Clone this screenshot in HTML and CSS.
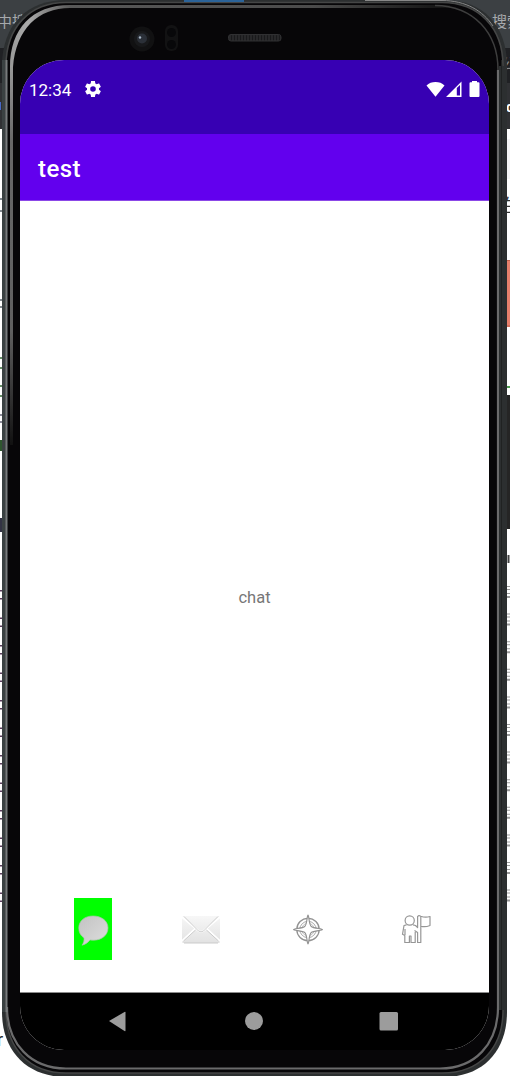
FILE: index.html
```html
<!DOCTYPE html>
<html lang="en">
<head>
<meta charset="utf-8">
<title>test</title>
<link rel="stylesheet" href="styles.css">
</head>
<body>
<div class="desktop">
  <svg class="backdrop" viewBox="0 0 510 1076" aria-hidden="true">
    <rect width="510" height="48" fill="#3c4043"/>
    <rect y="48" width="510" height="35" fill="#202124"/>
    <rect y="83" width="510" height="46" fill="#303134"/>
    <rect x="506" y="139" width="4" height="40" fill="#f4f4f6"/>
    <path d="M0 102v8" stroke="#4668c8" stroke-width="2"/>
    <rect x="506" y="260" width="4" height="67" fill="#e8806c"/>
    <path d="M506 260.5h4M506 326h4" stroke="#c2604b"/>
    <path d="M506 387h4" stroke="#4f9c50" stroke-width="2"/>
    <rect x="506" y="395" width="4" height="134" fill="#252525"/>
    <path d="M0 199h2M0 211h2M0 300h2M0 307h2" stroke="#59636b" stroke-width="1.5"/>
    <path d="M0 358h2M0 368h2M0 386h2M0 396h2" stroke="#356b35" stroke-width="1.5"/>
    <path d="M0 415h2M0 422h2" stroke="#667" stroke-width="1.5"/>
    <rect y="440" width="2" height="11" fill="#2e562e"/>
    <rect y="518" width="2" height="14" fill="#334"/>
    <path d="M1 590V905" stroke="#5a3d5c" stroke-width="2" stroke-dasharray="1.5 6.5 1.5 18"/>
    <path d="M508.500 555v8" stroke="#444" stroke-width="2"/>
    <path d="M508.500 586V905" stroke="#9a9a9a" stroke-width="3" stroke-dasharray="1 2 1 3 1 2 2 15.600"/>
  </svg>
  <span class="peek peek-left">中搜</span>
  <span class="peek peek-right">搜索</span>
  <span class="peek peek-tool">公</span>
  <span class="peek peek-copy">c</span>
  <span class="peek peek-text">生</span>
  <span class="peek peek-foot">r</span>

  <svg class="shell" viewBox="0 0 510 1076" aria-hidden="true">
    <defs>
      <linearGradient id="leftRim" x1="0" y1="0" x2="0" y2="1">
        <stop offset="0" stop-color="#999"/><stop offset=".2" stop-color="#686868"/>
        <stop offset=".7" stop-color="#606060"/><stop offset="1" stop-color="#111"/>
      </linearGradient>
      <linearGradient id="corner" x1="0" y1="0" x2="1" y2="0">
        <stop offset="0" stop-color="#999"/><stop offset=".3" stop-color="#aaa"/><stop offset="1" stop-color="#595959"/>
      </linearGradient>
      <linearGradient id="topRim" gradientUnits="userSpaceOnUse" x1="60" y1="0" x2="450" y2="0">
        <stop offset="0" stop-color="#595959"/><stop offset=".65" stop-color="#4b4b4b"/><stop offset="1" stop-color="#111"/>
      </linearGradient>
    </defs>
    <path d="M2 66C2 25 27 0 66 0H444C483 0 507 25 507 66V1012C507 1051 483 1077 444 1077H66C27 1077 2 1051 2 1012Z" fill="#2c2f30"/>
    <path d="M6 66C6 27 30 2.500 66 2.500H442C478 2.500 503 27 503 66V1010C503 1048 480 1073 442 1073H66C29 1073 6 1048 6 1010Z" fill="#070608" stroke="#454646" stroke-width="1.500"/>
    <path d="M498 70V1007C498 1044 475 1068.500 440 1068.500H66C31 1068.500 7 1044 7 1007" fill="none" stroke="#6b6b6c" stroke-width="2.200"/>
    <path d="M503 66V1010" stroke="#2c2f30" stroke-width="8"/>
    <path d="M501.500 60V1010" stroke="#202222"/>
    <path d="M3.500 60V1012" stroke="#3a4142" stroke-width="3"/>
    <path d="M6.500 60V1012" stroke="#777b7c" stroke-width="2"/>
    <path d="M10 66V445H13V66Z" fill="url(#leftRim)"/>
    <path d="M10 67C10 29 32 5 70 5V8C38 8 16 29 13 67Z" fill="url(#corner)"/>
    <rect x="70" y="5" width="380" height="3" fill="url(#topRim)"/>
    <path d="M435 5.500C474 6 498 33 498 70" fill="none" stroke="#3e3e3e" stroke-width="1.500"/>
    <path d="M365 .5H442C466 .5 483 11 493 26" fill="none" stroke="#888"/>
    <rect x="184" width="60" height="2" fill="#2b6399"/>
    <circle cx="142" cy="39" r="12.500" fill="#111112"/>
    <circle cx="142" cy="39" r="8" fill="#18191b"/>
    <circle cx="142" cy="38.500" r="5" fill="#2b3038"/>
    <circle cx="140" cy="37.500" r="1.200" fill="#a7b7c6"/>
    <rect x="165" y="25" width="13" height="26" rx="6" fill="#121213"/>
    <circle cx="171.500" cy="32.500" r="4.500" fill="#08080a"/>
    <circle cx="171.500" cy="44.500" r="4.500" fill="#08080a"/>
    <rect x="228.500" y="34.500" width="52.500" height="6.500" rx="2.500" fill="#28282a" stroke="#303032"/>
    <path d="M231 37.800H280" stroke="#19191b" stroke-width="5" stroke-dasharray="1 2"/>
  </svg>

  <main class="screen">
    <header class="status">
      <span class="clock">12:34</span>
      <svg class="gear" viewBox="2 2 20 20"><path fill="#fff" d="M19.430 12.980c.04-.32.070-.64.070-.98s-.030-.66-.070-.98l2.110-1.650c.19-.15.240-.42.120-.64l-2-3.460c-.12-.22-.39-.3-.61-.22l-2.490 1c-.52-.4-1.080-.73-1.690-.98l-.38-2.650C14.460 2.180 14.250 2 14 2h-4c-.25 0-.46.180-.49.420l-.38 2.650c-.61.250-1.170.59-1.690.98l-2.490-1c-.23-.09-.49 0-.61.220l-2 3.460c-.13.220-.07.490.12.640l2.110 1.650c-.04.320-.07.650-.07.980s.030.660.070.980l-2.110 1.650c-.19.150-.24.420-.12.640l2 3.460c.12.220.39.300.61.220l2.490-1c.52.400 1.080.730 1.690.980l.38 2.650c.03.240.24.420.49.420h4c.25 0 .46-.18.490-.42l.38-2.650c.61-.25 1.170-.59 1.690-.98l2.490 1c.23.090.49 0 .61-.22l2-3.460c.12-.22.070-.49-.12-.64zM12 15.500a3.500 3.500 0 1 1 0-7 3.500 3.500 0 0 1 0 7z"/></svg>
      <svg class="signals" viewBox="0 0 54 17">
        <path fill="#fff" d="M.5 4.500C5-.1 14-.1 18.500 4.500L9.500 15.800Z"/>
        <path fill="#fff" fill-rule="evenodd" d="M20 16 35.500.5V16ZM30.800 7V14.500H34V3.900Z"/>
        <path fill="#fff" d="M43.500 2.200a1 1 0 0 1 1-1H46V0h5v1.200h1.500a1 1 0 0 1 1 1V15a1 1 0 0 1-1 1h-8a1 1 0 0 1-1-1Z"/>
      </svg>
    </header>
    <div class="appbar"><h1>test</h1></div>
    <section class="content">chat</section>
    <nav class="tabs">
      <a class="tab active">
        <svg width="38" height="62" viewBox="0 0 38 62"><defs><linearGradient id="bubble" x1="0" y1="0" x2="1" y2="1"><stop stop-color="#c2c2c2"/><stop offset="1" stop-color="#dedede"/></linearGradient></defs><path d="M19 18C10.500 18 4.800 23 4.800 30c0 4.400 1.800 7.700 5.200 10 .3 2.500-.4 5-2 7.200 3.600-1 6.200-2.900 8-5.300 10 1.600 18-3.800 18-12 0-7-6.500-11.900-15-11.900Z" fill="url(#bubble)" stroke="#a7c5a7" stroke-width=".7"/></svg>
      </a>
      <a class="tab">
        <svg width="40" height="62" viewBox="0 0 40 62"><defs><linearGradient id="mail" x1="0" y1="0" x2="0" y2="1"><stop stop-color="#f7f7f7"/><stop offset="1" stop-color="#e2e2e2"/></linearGradient></defs><rect x="1" y="18" width="38" height="27" rx="1.500" fill="url(#mail)"/><path d="m1 19 16 13.500q3 2.500 6 0L39 19M1 43l13-12M39 43 26 31" fill="none" stroke="#fff" stroke-width="1.800"/><path d="m3 18.500 14.500 14.500q2.500 1.800 5 0L37 18.500M2.500 43l12-11M37.500 43l-12-11M3 45h34" fill="none" stroke="#c6c6c6" stroke-width=".9"/></svg>
      </a>
      <a class="tab">
        <svg width="32" height="62" viewBox="0 0 32 62" fill="none" stroke="#939393"><circle cx="16" cy="31.500" r="11.200" stroke-width="1.300"/><circle cx="16" cy="31.500" r="8.200" stroke="#aaa"/><circle cx="16" cy="31.500" r="6.300" stroke="#b5b5b5" stroke-width=".8"/><path d="M16 17c1 0 .8 9.500 3.300 11.500 2 1.900 11.200 2 11.200 3s-9.200 1.200-11.200 3C16.800 36.500 17 46 16 46s-.8-9.500-3.300-11.500c-2-1.800-11.200-2-11.200-3s9.200-1.100 11.200-3C15.200 26.500 15 17 16 17Z" fill="#fff" stroke-width="1.200"/></svg>
      </a>
      <a class="tab">
        <svg width="32" height="62" viewBox="0 0 32 62" fill="none" stroke="#969696" stroke-width="1.200" stroke-linejoin="round"><circle cx="9.700" cy="22.500" r="4.600"/><path d="M6.500 26.800 4 27.500 2.500 36.300 4.800 37.500V44.500H9.400V38H11V44.500H15.200V34M13 26.800 15.500 27.500 17.600 29.500V18.500L19 17.500 20.800 18.300Q25.500 20 30 18.500V27.500Q25 29.500 20.800 28.200V44.500H17.600V34.500L14.500 32.500M20.800 18.300V28.200M5 31V37"/></svg>
      </a>
    </nav>
    <footer class="system-nav">
      <svg viewBox="0 0 469 56" fill="#9c9c9c"><path d="M89 28 104.500 19q1-.5 1 .5v18q0 1-1 .5Z"/><circle cx="234" cy="28" r="9"/><rect x="359.500" y="19" width="18.500" height="18.500" rx="1.500"/></svg>
    </footer>
  </main>
</div>
</body>
</html>
```

FILE: styles.css
```css
* { box-sizing: border-box; }
body { margin: 0; background: #fff; font-family: Roboto, "Noto Sans CJK SC", sans-serif; }
.desktop { position: relative; width: 510px; height: 1076px; overflow: hidden; padding: 60px 21px 20px 20px; }
.backdrop, .shell { position: absolute; left: 0; top: 0; width: 510px; height: 1076px; }
.peek { position: absolute; font-size: 15px; line-height: 20px; white-space: nowrap; color: #a7a9ac; }
.peek-left { left: -3px; top: 12px; }
.peek-right { left: 492px; top: 12px; }
.peek-tool { left: 501px; top: 54px; color: #85878a; }
.peek-copy { left: 506px; top: 97px; color: #fff; font-weight: 700; }
.peek-text { left: 503px; top: 196px; color: #333; font-size: 18px; }
.peek-foot { left: -3px; top: 1030px; color: #222; font-size: 18px; }
.screen { position: relative; display: flex; flex-direction: column; width: 469px; height: 990px; background: #fff; border-radius: 44px; overflow: hidden; }
.status { display: flex; align-items: flex-start; height: 74px; padding: 20px 9px 0; background: #3700b3; color: #fff; }
.clock { width: 43px; font-size: 17px; line-height: 20px; white-space: nowrap; }
.gear { width: 16px; height: 16px; margin: 1px 0 0 12.5px; }
.signals { width: 54px; height: 17px; margin: 1px 0 0 auto; }
.appbar { display: flex; align-items: center; height: 67px; padding: 4px 18px 0; background: #6200ee; border-bottom: 1px solid #8b47e7; color: #fff; }
h1 { margin: 0; font-size: 24px; line-height: 28px; font-weight: 500; letter-spacing: .4px; }
.content { flex: 1; display: flex; align-items: center; justify-content: center; padding-top: 95px; color: #777; font-size: 16.5px; }
.tabs { display: grid; grid-template-columns: repeat(4, 1fr); justify-items: center; align-items: start; height: 94px; padding: 0 19px; }
.tab { display: flex; height: 62px; }
.active { background: #0f0; }
.system-nav { height: 58px; border-top: 1px solid #8b8b8b; background: #000; }
.system-nav svg { display: block; width: 469px; height: 56px; }
```
